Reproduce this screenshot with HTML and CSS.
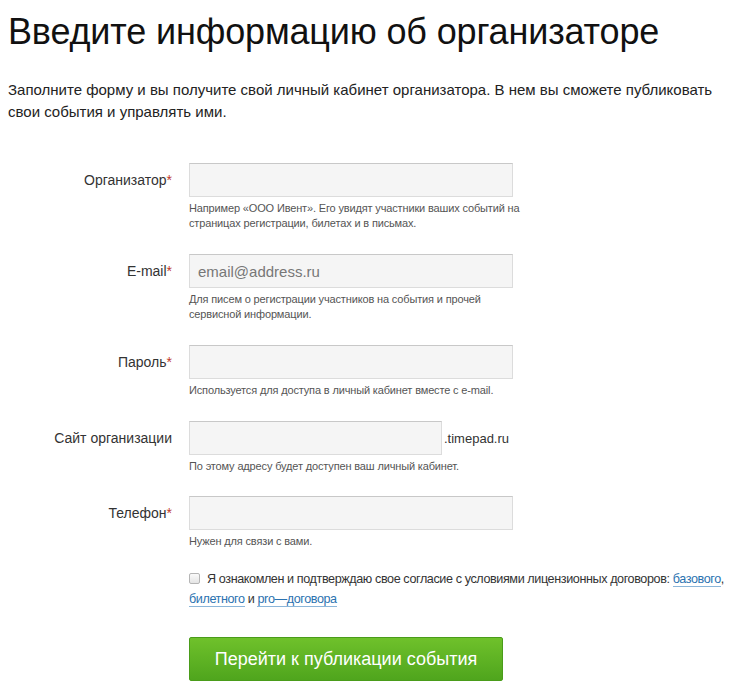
FILE: index.html
```html
<!DOCTYPE html>
<html lang="ru">
<head>
<meta charset="utf-8">
<link rel="stylesheet" href="styles.css">
</head>
<body>
<h1 class="title">Введите информацию об организаторе</h1>
<p class="intro">Заполните форму и вы получите свой личный кабинет организатора. В нем вы сможете публиковать свои события и управлять ими.</p>
<form class="form">
  <div class="row">
    <label class="label">Организатор<span class="req">*</span></label>
    <div class="field">
      <div class="input-line"><input class="input" type="text"></div>
      <div class="hint">Например «ООО Ивент». Его увидят участники ваших событий на страницах регистрации, билетах и в письмах.</div>
    </div>
  </div>
  <div class="row">
    <label class="label">E-mail<span class="req">*</span></label>
    <div class="field">
      <div class="input-line"><input class="input" type="text" placeholder="email@address.ru"></div>
      <div class="hint">Для писем о регистрации участников на события и прочей сервисной информации.</div>
    </div>
  </div>
  <div class="row">
    <label class="label">Пароль<span class="req">*</span></label>
    <div class="field">
      <div class="input-line"><input class="input" type="password"></div>
      <div class="hint">Используется для доступа в личный кабинет вместе с e-mail.</div>
    </div>
  </div>
  <div class="row row-tight">
    <label class="label">Сайт организации</label>
    <div class="field">
      <div class="input-line"><input class="input input-short" type="text"><span class="suffix">.timepad.ru</span></div>
      <div class="hint">По этому адресу будет доступен ваш личный кабинет.</div>
    </div>
  </div>
  <div class="row row-last">
    <label class="label">Телефон<span class="req">*</span></label>
    <div class="field">
      <div class="input-line"><input class="input" type="text"></div>
      <div class="hint">Нужен для связи с вами.</div>
    </div>
  </div>
  <div class="row row-agree">
    <div class="label"></div>
    <div class="agree"><span class="check"></span>Я ознакомлен и подтверждаю свое согласие с условиями лицензионных договоров: <a href="#">базового</a>, <a href="#">билетного</a> и <a href="#">pro—договора</a></div>
  </div>
  <div class="row row-submit">
    <div class="label"></div>
    <button class="btn" type="button">Перейти к публикации события</button>
  </div>
</form>
</body>
</html>
```
FILE: styles.css
```css
html, body {
  margin: 0;
  padding: 0;
  background: #fff;
}
body {
  padding: 0 8px;
  font-family: "Liberation Sans", Arial, sans-serif;
  color: #1a1a1a;
}
.title {
  margin: 12px 0 0;
  font-size: 36px;
  font-weight: normal;
  line-height: 40px;
  color: #111;
  letter-spacing: -0.15px;
}
.intro {
  margin: 27px 0 0;
  font-size: 15px;
  line-height: 22px;
  color: #222;
}
.form {
  margin-top: 40px;
}
.row {
  display: flex;
  gap: 17px;
  margin-bottom: 23px;
}
.row-tight {
  margin-bottom: 22px;
}
.row-last {
  margin-bottom: 20px;
}
.label {
  width: 164px;
  flex: none;
  text-align: right;
  font-size: 14px;
  line-height: 34px;
  color: #333;
}
.req {
  color: #c0392b;
}
.field {
  width: 340px;
}
.input-line {
  display: flex;
  align-items: center;
}
.input {
  box-sizing: border-box;
  width: 324px;
  height: 34px;
  margin: 0;
  padding: 0 8px;
  border: 1px solid #dcdcdc;
  border-top-color: #c8c8c8;
  background: #f5f5f5;
  font-family: "Liberation Sans", Arial, sans-serif;
  font-size: 15px;
  color: #333;
  outline: none;
}
.input::placeholder {
  color: #777;
}
.input-short {
  width: 253px;
}
.suffix {
  margin-left: 2px;
  font-size: 13px;
  color: #333;
}
.hint {
  margin-top: 4px;
  width: 340px;
  font-size: 11px;
  line-height: 15px;
  color: #555;
  letter-spacing: -0.15px;
}
.row-agree {
  margin-top: 0;
  margin-bottom: 0;
}
.agree {
  width: 549px;
  font-size: 12.6px;
  line-height: 20px;
  color: #333;
  letter-spacing: -0.4px;
}
.check {
  display: inline-block;
  box-sizing: border-box;
  width: 11px;
  height: 11px;
  margin-right: 7px;
  vertical-align: -1px;
  border: 1px solid #b5b5b5;
  border-radius: 2px;
  background: linear-gradient(#fafafa, #e4e4e4);
}
.agree a {
  color: #2b72b0;
  text-decoration: none;
  border-bottom: 1px solid #8cb6d9;
}
.row-submit {
  margin-top: 28px;
}
.btn {
  width: 314px;
  height: 44px;
  padding: 0;
  border: 1px solid #4a9c1a;
  border-radius: 2px;
  background: linear-gradient(#6fc12b, #4fa51d);
  color: #fff;
  font-family: "Liberation Sans", Arial, sans-serif;
  font-size: 18px;
  cursor: pointer;
}
```
